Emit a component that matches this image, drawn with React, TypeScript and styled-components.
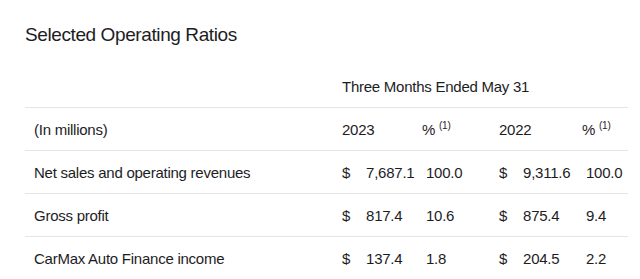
import styled, { createGlobalStyle } from "styled-components";

const GlobalStyle = createGlobalStyle`
  html, body {
    margin: 0;
    padding: 0;
    background: #ffffff;
  }
  body {
    font-family: "Liberation Sans", Arial, sans-serif;
    color: #1d1d1f;
  }
`;

interface RowData {
  label: string;
  cur: string;
  curPct: string;
  prev: string;
  prevPct: string;
}

const rows: RowData[] = [
  { label: "Net sales and operating revenues", cur: "7,687.1", curPct: "100.0", prev: "9,311.6", prevPct: "100.0" },
  { label: "Gross profit", cur: "817.4", curPct: "10.6", prev: "875.4", prevPct: "9.4" },
  { label: "CarMax Auto Finance income", cur: "137.4", curPct: "1.8", prev: "204.5", prevPct: "2.2" },
];

const App = () => {
  return (
    <>
      <GlobalStyle />
      <Page>
        <Title>Selected Operating Ratios</Title>
        <Table>
          <PeriodRow>
            <Cell />
            <Cell>Three Months Ended May 31</Cell>
          </PeriodRow>
          <Row>
            <Cell>(In millions)</Cell>
            <Cell>2023</Cell>
            <PctHead>
              % <sup>(1)</sup>
            </PctHead>
            <Cell>2022</Cell>
            <PctHead>
              % <sup>(1)</sup>
            </PctHead>
          </Row>
          {rows.map((r) => (
            <Row key={r.label}>
              <Cell>{r.label}</Cell>
              <MoneyCell>
                <span>$</span>
                <span>{r.cur}</span>
              </MoneyCell>
              <PctCell>{r.curPct}</PctCell>
              <MoneyCell>
                <span>$</span>
                <span>{r.prev}</span>
              </MoneyCell>
              <PctCell>{r.prevPct}</PctCell>
            </Row>
          ))}
        </Table>
      </Page>
    </>
  );
};

export default App;

const Page = styled.div`
  padding: 23px 12px 0 25px;
`;

const Title = styled.h2`
  margin: 0 0 18px 0;
  font-size: 19px;
  font-weight: 400;
  letter-spacing: -0.4px;
  line-height: 24px;
`;

const Table = styled.div`
  display: flex;
  flex-direction: column;
  width: 603px;
`;

const Row = styled.div`
  display: grid;
  grid-template-columns: 308px 80px 77px 83px 55px;
  height: 42px;
  align-items: center;
  border-top: 1px solid #e5e5e5;
  font-size: 15px;
  letter-spacing: -0.25px;
`;

const PeriodRow = styled(Row)`
  grid-template-columns: 308px 295px;
  height: 42px;
  border-top: none;
`;

const Cell = styled.div`
  padding: 0 9px;
  white-space: nowrap;
`;

const PctHead = styled(Cell)`
  sup {
    font-size: 10px;
    vertical-align: 6px;
    line-height: 0;
  }
`;

const MoneyCell = styled(Cell)`
  display: flex;
  gap: 16px;
`;

const PctCell = styled(Cell)`
  padding-left: 13px;
`;
